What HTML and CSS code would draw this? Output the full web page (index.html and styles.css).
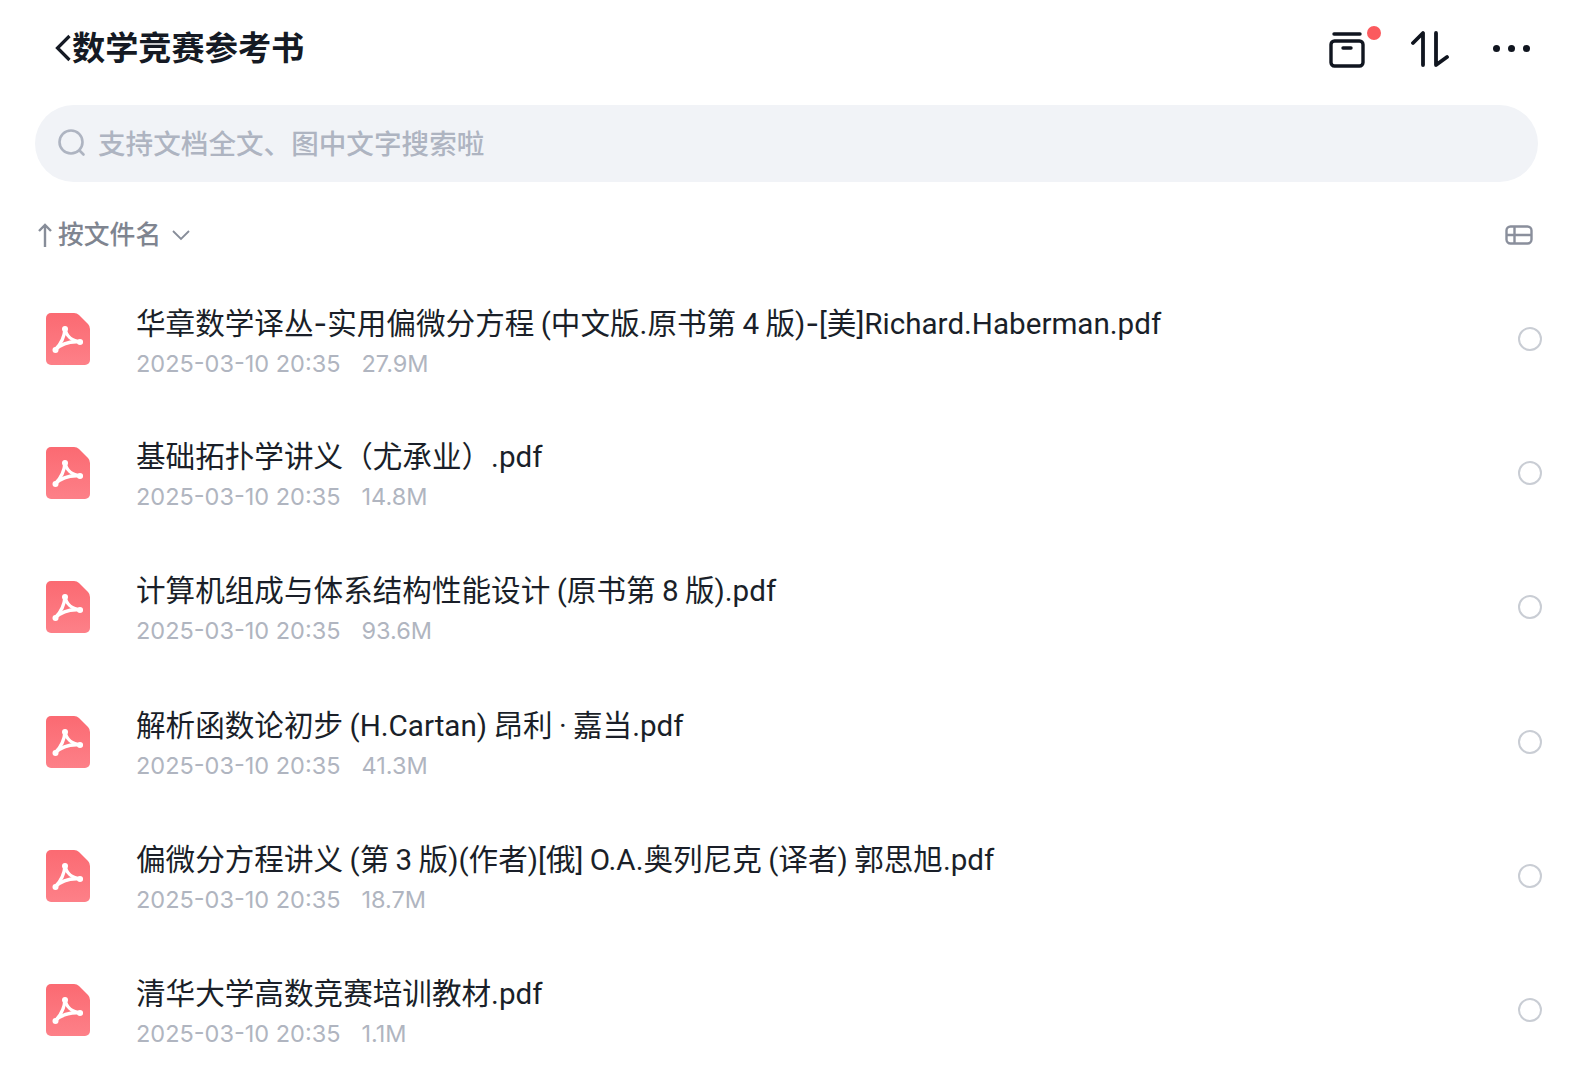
FILE: index.html
```html
<!DOCTYPE html>
<html lang="zh-CN">
<head>
  <meta charset="UTF-8">
  <meta name="viewport" content="width=device-width, initial-scale=1.0">
  <title>数学竞赛参考书</title>
  <link rel="stylesheet" href="styles.css">
</head>
<body>
  <svg class="defs" width="0" height="0">
    <symbol id="pdf" viewBox="0 0 44 52">
      <defs>
        <linearGradient id="pdfFill" x1="0" y1="0" x2="0" y2="1">
          <stop offset="0" stop-color="#fb6a72"/>
          <stop offset="1" stop-color="#fd8088"/>
        </linearGradient>
      </defs>
      <path d="M5 0H28Q31 0 33 2L42 11Q44 13 44 16V47a5 5 0 0 1-5 5H5a5 5 0 0 1-5-5V5a5 5 0 0 1 5-5Z" fill="url(#pdfFill)"/>
      <g fill="none" stroke="#fff" stroke-width="3.400" stroke-linecap="round" stroke-linejoin="round">
        <path d="M19 15.500C18.500 24 15 31 9 37"/>
        <path d="M19 15.500C20 22 25 28 35 29"/>
        <path d="M9 37C15 31 25 28 35 29"/>
      </g>
      <circle cx="9.500" cy="37" r="3" fill="#fff"/>
      <circle cx="34" cy="29" r="3" fill="#fff"/>
      <circle cx="19" cy="16" r="3" fill="#fff"/>
    </symbol>
  </svg>

  <div class="page">
    <header class="topbar">
      <div class="title-wrap">
        <svg class="back" width="18" height="30" viewBox="0 0 18 30"><path d="M15.500 3L3.500 15L15.500 27" fill="none" stroke="#151a24" stroke-width="3.200"/></svg>
        <h1>数学竞赛参考书</h1>
      </div>
      <div class="actions">
        <div class="box-btn">
          <svg width="36" height="36" viewBox="0 0 36 36" fill="none" stroke="#10151f" stroke-width="3.400" stroke-linecap="round" stroke-linejoin="round">
            <path d="M5 2H31"/>
            <rect x="2" y="9" width="32" height="25" rx="3.500"/>
            <path d="M14 16H22"/>
          </svg>
          <span class="dot"></span>
        </div>
        <svg class="sort-btn" width="38" height="38" viewBox="0 0 38 38" fill="none" stroke="#10151f" stroke-width="3.800" stroke-linecap="round" stroke-linejoin="round">
          <path d="M2 13L12 3V35"/>
          <path d="M25 3V35L36 27"/>
        </svg>
        <div class="more"><i></i><i></i><i></i></div>
      </div>
    </header>

    <div class="search">
      <svg width="30" height="30" viewBox="0 0 30 30" fill="none" stroke="#aeb4c1" stroke-width="2.600" stroke-linecap="round"><circle cx="14" cy="14" r="11.500"/><path d="M22.500 22.500L26.500 26.500"/></svg>
      <span>支持文档全文、图中文字搜索啦</span>
    </div>

    <div class="sortbar">
      <div class="sort-label">
        <svg width="16" height="26" viewBox="0 0 16 26" fill="none" stroke="#878d99" stroke-width="2.400"><path d="M8 25V3M2 9L8 3L14 9"/></svg>
        <span>按文件名</span>
        <svg class="chev" width="20" height="12" viewBox="0 0 20 12" fill="none" stroke="#878d99" stroke-width="1.800"><path d="M2 2L10 10L18 2"/></svg>
      </div>
      <svg width="28" height="20" viewBox="0 0 28 20" fill="none" stroke="#8a8f9c" stroke-width="2.400"><rect x="1.500" y="1.500" width="25" height="17" rx="4"/><path d="M1.500 10H26.500M9.500 1.500V18.500"/></svg>
    </div>

    <ul class="files">
      <li class="file">
        <svg class="file-icon"><use href="#pdf"/></svg>
        <div class="file-info">
          <div class="file-name">华章数学译丛<span class="dash">-</span>实用偏微分方程 (中文版.原书第 4 版)<span class="dash">-</span>[美]Richard.Haberman.pdf</div>
          <div class="file-meta"><span>2025-03-10 20:35</span><span>27.9M</span></div>
        </div>
        <span class="radio"></span>
      </li>
      <li class="file">
        <svg class="file-icon"><use href="#pdf"/></svg>
        <div class="file-info">
          <div class="file-name">基础拓扑学讲义（尤承业）.pdf</div>
          <div class="file-meta"><span>2025-03-10 20:35</span><span>14.8M</span></div>
        </div>
        <span class="radio"></span>
      </li>
      <li class="file">
        <svg class="file-icon"><use href="#pdf"/></svg>
        <div class="file-info">
          <div class="file-name">计算机组成与体系结构性能设计 (原书第 8 版).pdf</div>
          <div class="file-meta"><span>2025-03-10 20:35</span><span>93.6M</span></div>
        </div>
        <span class="radio"></span>
      </li>
      <li class="file">
        <svg class="file-icon"><use href="#pdf"/></svg>
        <div class="file-info">
          <div class="file-name">解析函数论初步 (H.Cartan) 昂利 · 嘉当.pdf</div>
          <div class="file-meta"><span>2025-03-10 20:35</span><span>41.3M</span></div>
        </div>
        <span class="radio"></span>
      </li>
      <li class="file">
        <svg class="file-icon"><use href="#pdf"/></svg>
        <div class="file-info">
          <div class="file-name">偏微分方程讲义 (第 3 版)(作者)[俄] O.A.奥列尼克 (译者) 郭思旭.pdf</div>
          <div class="file-meta"><span>2025-03-10 20:35</span><span>18.7M</span></div>
        </div>
        <span class="radio"></span>
      </li>
      <li class="file">
        <svg class="file-icon"><use href="#pdf"/></svg>
        <div class="file-info">
          <div class="file-name">清华大学高数竞赛培训教材.pdf</div>
          <div class="file-meta"><span>2025-03-10 20:35</span><span>1.1M</span></div>
        </div>
        <span class="radio"></span>
      </li>
    </ul>
  </div>
</body>
</html>
```

FILE: styles.css
```css
* {
  box-sizing: border-box;
}
html, body {
  margin: 0;
  height: 100%;
  background: #fff;
  overflow: hidden;
}
body {
  font-family: "Inter", "Noto Sans CJK SC", sans-serif;
}
.defs {
  position: absolute;
}
.page {
  height: 1080px;
  padding: 0 35px;
}
.topbar {
  height: 105px;
  display: flex;
  align-items: center;
  justify-content: space-between;
  padding: 0 8px 10px 19px;
}
.title-wrap {
  display: flex;
  align-items: center;
}
.title-wrap h1 {
  margin: 0;
  font-size: 33.200px;
  font-weight: 700;
  line-height: 44px;
  color: #151a24;
}
.actions {
  display: flex;
  align-items: center;
}
.box-btn {
  position: relative;
  width: 36px;
  height: 36px;
  margin-top: 4px;
  margin-right: 46px;
}
.dot {
  position: absolute;
  top: -6px;
  right: -16px;
  width: 14px;
  height: 14px;
  border-radius: 50%;
  background: #fb5a5e;
}
.sort-btn {
  margin-top: 3px;
  margin-right: 44px;
}
.more {
  display: flex;
  gap: 8px;
  margin-top: 2px;
}
.more i {
  width: 7px;
  height: 7px;
  border-radius: 50%;
  background: #10151f;
}
.search {
  height: 77px;
  width: 1503px;
  border-radius: 39px;
  background: #f1f3f7;
  display: flex;
  align-items: center;
  padding: 0 0 3px 22px;
  gap: 11px;
  font-size: 27.600px;
  font-weight: 500;
  color: #aeb4c1;
}
.search svg {
  margin-top: 2px;
}
.sortbar {
  height: 74px;
  margin-top: 16px;
  padding-right: 5px;
  width: 1503px;
  display: flex;
  align-items: center;
  justify-content: space-between;
}
.sort-label {
  display: flex;
  align-items: center;
  gap: 5px;
  padding-left: 2px;
  font-size: 25.800px;
  font-weight: 500;
  line-height: 30px;
  color: #7f8590;
}
.sort-label span {
  margin-top: -1px;
}
.chev {
  margin-left: 5px;
}
.files {
  list-style: none;
  margin: 0;
  padding: 0;
}
.file {
  height: 134.200px;
  display: flex;
  align-items: center;
  padding-left: 11px;
}
.file-icon {
  width: 44px;
  height: 52px;
  flex: none;
}
.file-info {
  flex: 1;
  min-width: 0;
  margin-left: 46px;
  padding-top: 6px;
}
.file-name {
  font-family: "Roboto", "Noto Sans CJK SC", sans-serif;
  font-size: 29.600px;
  line-height: 40px;
  word-spacing: -1px;
  color: #1a1f29;
  white-space: nowrap;
}
.dash {
  font-family: "Inter", sans-serif;
}
.file-meta {
  display: flex;
  gap: 21px;
  margin-top: 2px;
  font-size: 23.500px;
  line-height: 36px;
  color: #b0b5c0;
}
.radio {
  flex: none;
  width: 24px;
  height: 24px;
  margin-right: -4px;
  border: 2px solid #c9cdd4;
  border-radius: 50%;
}
```
